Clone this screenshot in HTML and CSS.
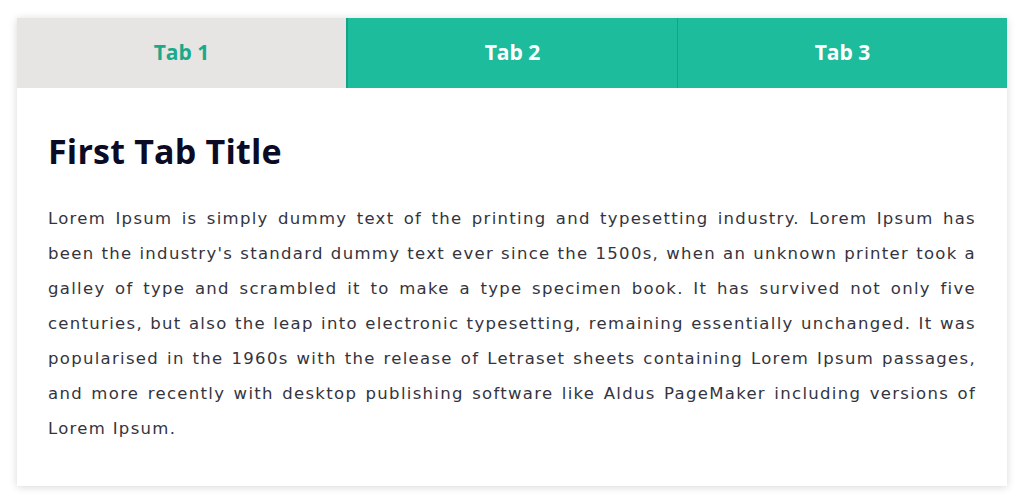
FILE: index.html
```html
<!DOCTYPE html>
<html>
<head>
<meta charset="utf-8">
<link rel="stylesheet" href="styles.css">
</head>
<body>
<div class="card">
  <div class="tabs">
    <div class="tab active">Tab 1</div>
    <div class="tab">Tab 2</div>
    <div class="tab">Tab 3</div>
  </div>
  <div class="panel">
    <h2 class="title">First Tab Title</h2>
    <p class="text">
      <span class="line">Lorem Ipsum is simply dummy text of the printing and typesetting industry. Lorem Ipsum has</span>
      <span class="line">been the industry's standard dummy text ever since the 1500s, when an unknown printer took a</span>
      <span class="line">galley of type and scrambled it to make a type specimen book. It has survived not only five</span>
      <span class="line">centuries, but also the leap into electronic typesetting, remaining essentially unchanged. It was</span>
      <span class="line">popularised in the 1960s with the release of Letraset sheets containing Lorem Ipsum passages,</span>
      <span class="line">and more recently with desktop publishing software like Aldus PageMaker including versions of</span>
      <span class="line last">Lorem Ipsum.</span>
    </p>
  </div>
</div>
</body>
</html>
```
FILE: styles.css
```css
* { box-sizing: border-box; }
html, body { margin: 0; padding: 0; background: #ffffff; }
body {
  font-family: "Open Sans", "DejaVu Sans", sans-serif;
  padding: 18px 17px;
}
.card {
  width: 990px;
  height: 468px;
  background: #ffffff;
  box-shadow: 0 1px 8px rgba(0, 0, 0, 0.16);
}
.tabs {
  display: flex;
  height: 70px;
}
.tab {
  flex: 1;
  display: flex;
  align-items: center;
  justify-content: center;
  padding-bottom: 2px;
  background: #1dbc9c;
  color: #ffffff;
  font-size: 21px;
  font-weight: 700;
  border-left: 1px solid #15a386;
}
.tab.active {
  background: #e6e5e3;
  color: #1aa98b;
  border-left: none;
  border-right: 1px solid #15a386;
}
.tab.active + .tab { border-left: 1px solid #15a386; }
.panel {
  padding: 40px 31px 0 31px;
}
.title {
  margin: 0 0 27px 0;
  font-size: 34px;
  font-weight: 700;
  color: #0b0b25;
  line-height: 46px;
  letter-spacing: 0.2px;
}
.text {
  margin: 0;
  font-family: "DejaVu Sans", sans-serif;
  font-size: 16.5px;
  line-height: 35px;
  color: #34343e;
  letter-spacing: 1.3px;
}
.line {
  display: block;
  text-align: justify;
  text-align-last: justify;
}
.line.last { text-align-last: left; }
```
